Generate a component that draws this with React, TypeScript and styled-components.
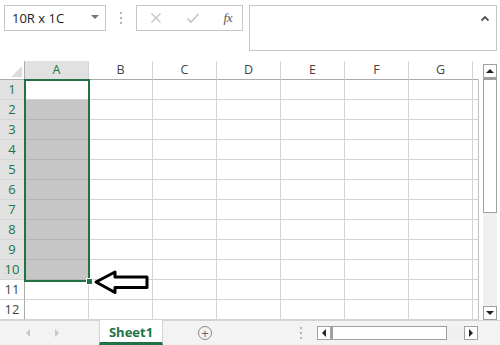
import React from "react";
import styled, { createGlobalStyle } from "styled-components";

const Global = createGlobalStyle`
  html, body { margin: 0; padding: 0; background: #fff; }
  body { font-family: "Open Sans", "Noto Sans", sans-serif; }
`;

const GREEN = "#217346";
const GRID = "#d4d4d4";

const Page = styled.div`
  width: 500px;
  height: 345px;
  overflow: hidden;
  display: flex;
  flex-direction: column;
  background: #fff;
  position: relative;
`;

const Toolbar = styled.div`
  height: 61px;
  display: flex;
  align-items: flex-start;
  padding: 5px 3px 0 4px;
  box-sizing: border-box;
`;

const NameBox = styled.div`
  width: 102px;
  height: 26px;
  box-sizing: border-box;
  border: 1px solid #c6c6c6;
  display: flex;
  align-items: center;
  justify-content: space-between;
  padding: 0 6px 0 7px;
  font-size: 13px;
  color: #222;
`;

const Caret = styled.span`
  width: 0;
  height: 0;
  border-left: 4px solid transparent;
  border-right: 4px solid transparent;
  border-top: 4px solid #777;
  margin-top: -2px;
`;

const Dots = styled.div`
  width: 30px;
  height: 26px;
  display: flex;
  flex-direction: column;
  align-items: center;
  justify-content: center;
  gap: 3px;
  & > i {
    width: 2px;
    height: 2px;
    background: #b4b4b4;
  }
`;

const FxBox = styled.div`
  width: 107px;
  height: 26px;
  box-sizing: border-box;
  border: 1px solid #c6c6c6;
  display: flex;
  align-items: center;
  justify-content: space-between;
  padding: 0 10px 0 13px;
`;

const FxText = styled.span`
  font-family: "Liberation Serif", serif;
  font-style: italic;
  font-size: 13px;
  color: #555;
  letter-spacing: -0.5px;
`;

const FormulaBar = styled.div`
  margin-left: 6px;
  width: 248px;
  height: 46px;
  box-sizing: border-box;
  border: 1px solid #c6c6c6;
  display: flex;
  justify-content: flex-end;
  padding: 9px 6px 0 0;
`;

const Body = styled.div`
  display: flex;
  height: 259px;
`;

const SheetWrap = styled.div`
  position: relative;
  width: 479px;
  height: 259px;
  overflow: hidden;
`;

const Grid = styled.div`
  display: grid;
  grid-template-columns: 25px repeat(7, 64px) 6px;
  grid-template-rows: 19px repeat(12, 20px);
`;

const Corner = styled.div`
  border-right: 1px solid #ababab;
  border-bottom: 1px solid #ababab;
  position: relative;
  &::after {
    content: "";
    position: absolute;
    right: 2px;
    bottom: 2px;
    width: 0;
    height: 0;
    border-left: 11px solid transparent;
    border-bottom: 11px solid #dcdcdc;
  }
`;

const ColHead = styled.div<{ $active?: boolean; $last?: boolean }>`
  box-sizing: border-box;
  border-right: 1px solid ${(p) => (p.$last ? "transparent" : GRID)};
  border-bottom: 1px solid #ababab;
  background: ${(p) => (p.$active ? "#e1e1e1" : "#fff")};
  color: ${(p) => (p.$active ? GREEN : "#444")};
  font-size: 12.5px;
  display: flex;
  align-items: center;
  justify-content: center;
  line-height: 1;
`;

const RowHead = styled.div<{ $active?: boolean }>`
  box-sizing: border-box;
  border-right: 1px solid #ababab;
  border-bottom: 1px solid ${GRID};
  background: ${(p) => (p.$active ? "#e1e1e1" : "#fff")};
  color: ${(p) => (p.$active ? GREEN : "#444")};
  font-size: 13px;
  display: flex;
  align-items: center;
  justify-content: center;
  line-height: 1;
  padding-bottom: 1px;
`;

const Cell = styled.div<{ $sel?: boolean; $last?: boolean }>`
  box-sizing: border-box;
  border-right: 1px solid ${(p) => (p.$last ? "#bdbdbd" : GRID)};
  border-bottom: 1px solid ${(p) => (p.$sel ? "#b4b4b4" : GRID)};
  background: ${(p) => (p.$sel ? "#c6c6c6" : "#fff")};
`;

const Selection = styled.div`
  position: absolute;
  left: 24px;
  top: 18px;
  width: 66px;
  height: 203px;
  box-sizing: border-box;
  border: 2px solid ${GREEN};
  pointer-events: none;
`;

const Handle = styled.div`
  position: absolute;
  left: 86px;
  top: 217px;
  width: 7px;
  height: 7px;
  box-sizing: border-box;
  background: ${GREEN};
  border: 1px solid #fff;
`;

const ArrowMark = styled.svg`
  position: absolute;
  left: 93px;
  top: 208px;
`;

const VScroll = styled.div`
  margin-left: 4px;
  margin-top: 3px;
  width: 14px;
  height: 256px;
  display: flex;
  flex-direction: column;
  background: #f0f0f0;
`;

const SBtn = styled.div<{ $dir: "up" | "down" | "left" | "right" }>`
  width: 14px;
  height: 14px;
  box-sizing: border-box;
  border: 1px solid #a0a0a0;
  background: #fff;
  display: flex;
  align-items: center;
  justify-content: center;
  flex: none;
  &::before {
    content: "";
    width: 0;
    height: 0;
    ${(p) =>
      p.$dir === "up"
        ? "border-left:4px solid transparent;border-right:4px solid transparent;border-bottom:4px solid #222;"
        : p.$dir === "down"
        ? "border-left:4px solid transparent;border-right:4px solid transparent;border-top:4px solid #222;"
        : p.$dir === "left"
        ? "border-top:4px solid transparent;border-bottom:4px solid transparent;border-right:4px solid #222;"
        : "border-top:4px solid transparent;border-bottom:4px solid transparent;border-left:4px solid #222;"}
  }
`;

const VThumb = styled.div`
  height: 135px;
  box-sizing: border-box;
  border: 1px solid #a0a0a0;
  border-top: 2px solid #a0a0a0;
  background: #fff;
  flex: none;
`;

const Spacer = styled.div`
  flex: 1;
`;

const TabBar = styled.div`
  height: 25px;
  border-top: 1px solid #d4d4d4;
  box-sizing: border-box;
  background: #f3f3f3;
  display: flex;
  align-items: center;
`;

const NavArrows = styled.div`
  width: 99px;
  display: flex;
  align-items: center;
  padding-left: 26px;
  box-sizing: border-box;
  gap: 25px;
`;

const NavTri = styled.span<{ $right?: boolean }>`
  width: 0;
  height: 0;
  border-top: 4px solid transparent;
  border-bottom: 4px solid transparent;
  ${(p) => (p.$right ? "border-left: 4px solid #c8c8c8;" : "border-right: 4px solid #c8c8c8;")}
`;

const Tab = styled.div`
  align-self: stretch;
  width: 64px;
  margin-top: -1px;
  background: #fff;
  border-left: 1px solid #d4d4d4;
  border-right: 1px solid #d4d4d4;
  border-bottom: 3px solid ${GREEN};
  box-sizing: border-box;
  color: ${GREEN};
  font-weight: 700;
  font-size: 13px;
  display: flex;
  align-items: center;
  justify-content: center;
  padding-top: 1px;
`;

const AddBtn = styled.div`
  margin-left: 35px;
  width: 14px;
  height: 14px;
  border: 1px solid #888;
  border-radius: 50%;
  box-sizing: border-box;
  color: #666;
  display: flex;
  align-items: center;
  justify-content: center;
  font-size: 13px;
  line-height: 1;
`;

const TabDots = styled(Dots)`
  width: 6px;
  margin-left: 86px;
  height: 20px;
`;

const HScroll = styled.div`
  margin-left: 13px;
  display: flex;
  align-items: center;
  width: 161px;
  height: 14px;
  background: #f0f0f0;
`;

const HThumb = styled.div`
  width: 116px;
  height: 14px;
  box-sizing: border-box;
  border: 1px solid #a0a0a0;
  border-left: 2px solid #a0a0a0;
  background: #fff;
`;

const cols = ["A", "B", "C", "D", "E", "F", "G"];

export default function App() {
  const rows = Array.from({ length: 12 }, (_, i) => i + 1);
  return (
    <Page>
      <Global />
      <Toolbar>
        <NameBox>
          <span>10R x 1C</span>
          <Caret />
        </NameBox>
        <Dots>
          <i />
          <i />
          <i />
        </Dots>
        <FxBox>
          <svg width="12" height="12" viewBox="0 0 12 12">
            <path d="M1.5 1.5 L10.5 10.5 M10.5 1.5 L1.5 10.5" stroke="#c4c4c4" strokeWidth="1.3" />
          </svg>
          <svg width="14" height="12" viewBox="0 0 14 12">
            <path d="M1.5 6.5 L5 10 L12.5 2" stroke="#c4c4c4" strokeWidth="1.6" fill="none" />
          </svg>
          <FxText>fx</FxText>
        </FxBox>
        <FormulaBar>
          <svg width="10" height="7" viewBox="0 0 10 7">
            <path d="M1.5 5.5 L5 2 L8.5 5.5" stroke="#555" strokeWidth="1.8" fill="none" />
          </svg>
        </FormulaBar>
      </Toolbar>
      <Body>
        <SheetWrap>
          <Grid>
            <Corner />
            {cols.map((c, i) => (
              <ColHead key={c} $active={i === 0}>
                {c}
              </ColHead>
            ))}
            <ColHead $last />
            {rows.map((r) => (
              <React.Fragment key={r}>
                <RowHead $active={r <= 10}>{r}</RowHead>
                {cols.map((c, i) => (
                  <Cell key={c} $sel={i === 0 && r >= 2 && r <= 10} />
                ))}
                <Cell $last />
              </React.Fragment>
            ))}
          </Grid>
          <Selection />
          <Handle />
          <ArrowMark width="57" height="27" viewBox="0 0 57 27">
            <path
              d="M3 13 L22 3 L22 8 L54 8 L54 18.5 L22 18.5 L22 23.5 Z"
              fill="#fff"
              stroke="#000"
              strokeWidth="3"
              strokeLinejoin="round"
            />
          </ArrowMark>
        </SheetWrap>
        <VScroll>
          <SBtn $dir="up" />
          <VThumb />
          <Spacer />
          <SBtn $dir="down" />
        </VScroll>
      </Body>
      <TabBar>
        <NavArrows>
          <NavTri />
          <NavTri $right />
        </NavArrows>
        <Tab>Sheet1</Tab>
        <AddBtn>+</AddBtn>
        <TabDots>
          <i />
          <i />
          <i />
        </TabDots>
        <HScroll>
          <SBtn $dir="left" />
          <HThumb />
          <Spacer />
          <SBtn $dir="right" />
        </HScroll>
      </TabBar>
    </Page>
  );
}
